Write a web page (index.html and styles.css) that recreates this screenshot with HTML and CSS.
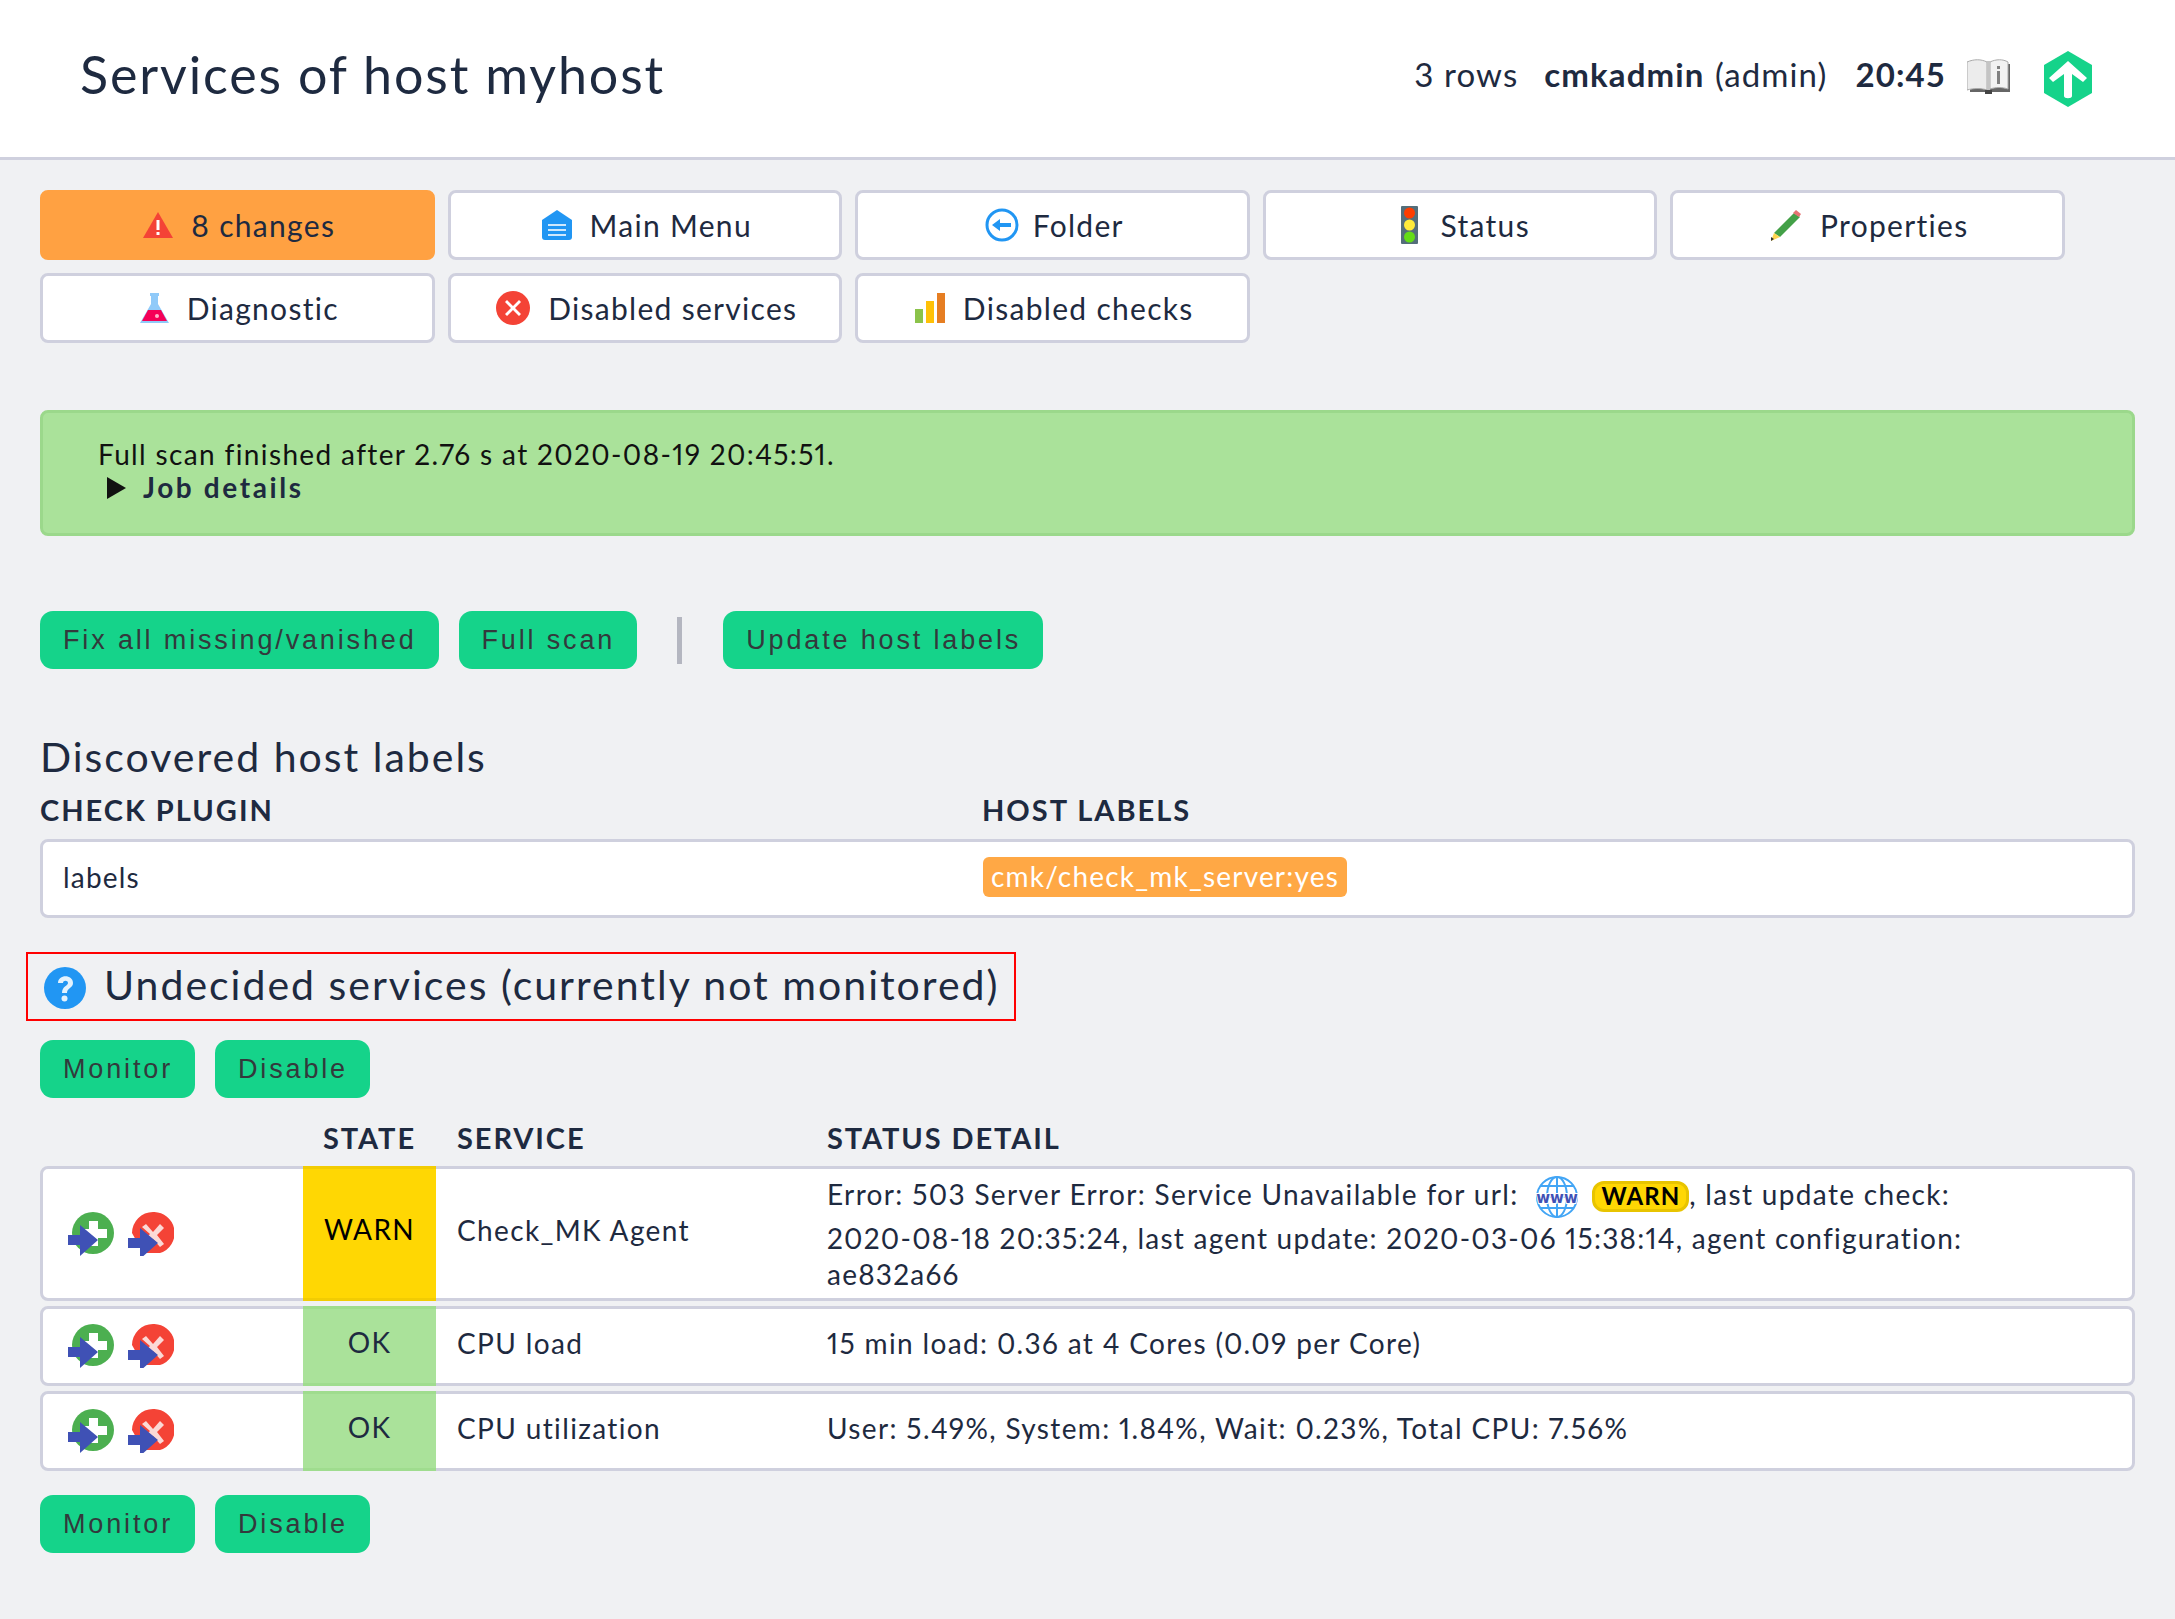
FILE: index.html
```html
<!DOCTYPE html>
<html lang="en">
<head>
    <meta charset="UTF-8">
    <title>Services of host myhost</title>
    <link rel="stylesheet" href="styles.css">
</head>
<body>
    <svg class="sprites" width="0" height="0">
        <symbol id="act-add" viewBox="0 0 46 44">
            <circle cx="25" cy="21" r="21" fill="#4caf50"/>
            <path d="M21 9h9v8h9v9h-9v8h-9v-8h-8v-9h8z" fill="#fff"/>
            <path d="M0 23h12v-10l18 15-18 16v-11h-12z" fill="#3f51b5"/>
        </symbol>
        <symbol id="act-del" viewBox="0 0 46 44">
            <path d="M25 0a21 21 0 0 1 7 41h-18v-2l-10-18a21 21 0 0 1 21-21z" fill="#f44336"/>
            <path d="M18 12l7 8 7-8 4 4-7 7 7 9-4 3-7-8-7 7-4-4 8-8-8-7z" fill="#fbd9d6"/>
            <path d="M0 26h12v-10l18 15-18 16v-11h-12z" fill="#3f51b5"/>
        </symbol>
    </svg>

    <header class="page-head">
        <h1>Services of host myhost</h1>
        <div class="head-info">
            <span class="rows">3 rows</span>
            <span class="user"><b>cmkadmin</b> <span class="role">(admin)</span></span>
            <b class="clock">20:45</b>
            <svg class="book" viewBox="0 0 43 35">
                <rect x="3" y="5" width="40" height="28" fill="#666"/>
                <path d="M0 3c7-3 14-3 20 0v28c-6-2-13-2-20 0z" fill="#ececec" stroke="#aaa"/>
                <path d="M23 3c6-3 13-3 18 0v27c-6-2-12-2-18 0z" fill="#f2f2f2" stroke="#aaa"/>
                <rect x="20" y="2" width="3" height="29" fill="#c4c4c4"/>
                <rect x="18" y="31" width="7" height="4" fill="#444"/>
                <rect x="30" y="12" width="3" height="13" fill="#808080"/>
                <rect x="30" y="7" width="3" height="3" fill="#808080"/>
            </svg>
            <svg class="logo" viewBox="0 0 48 56">
                <path d="M24 0l24 14v28l-24 14-24-14v-28z" fill="#15d38a"/>
                <path d="M24 11l19 17-4 4-11-8v22c0 3-8 3-8 0v-22l-11 8-4-4z" fill="#fff" transform="translate(0 -1)"/>
            </svg>
        </div>
    </header>

    <main class="content">
        <nav class="toolbar">
            <a class="tool-btn changes">
                <svg class="ico" width="30" height="26" viewBox="0 0 30 26"><path d="M15 0l15 26h-30z" fill="#f44336"/><rect x="13.500" y="8" width="3" height="10" fill="#fff"/><rect x="13.500" y="20" width="3" height="3" fill="#fff"/></svg>
                8 changes
            </a>
            <a class="tool-btn">
                <svg class="ico" width="30" height="30" viewBox="0 0 30 30"><path d="M15 0l15 10v17a3 3 0 0 1-3 3h-24a3 3 0 0 1-3-3v-17z" fill="#2196f3"/><path d="M6 14h18v2h-18zM6 19h18v2h-18zM6 24h18v2h-18z" fill="#cfe8fc"/></svg>
                Main Menu
            </a>
            <a class="tool-btn folder-btn">
                <svg class="ico" width="34" height="34" viewBox="0 0 34 34"><circle cx="17" cy="17" r="15" fill="#fff" stroke="#2196f3" stroke-width="3"/><path d="M7 17l8-6v4h11v4h-11v4z" fill="#2196f3"/></svg>
                Folder
            </a>
            <a class="tool-btn status-btn">
                <svg class="ico" width="17" height="38" viewBox="0 0 17 38"><rect width="17" height="38" rx="1" fill="#546e7a"/><ellipse cx="8.500" cy="7" rx="5.500" ry="5.500" fill="#ff3d00"/><ellipse cx="8.500" cy="19" rx="5.500" ry="5.500" fill="#ffeb3b"/><ellipse cx="8.500" cy="31" rx="5.500" ry="5.500" fill="#64dd17"/></svg>
                Status
            </a>
            <a class="tool-btn">
                <svg class="ico" width="32" height="32" viewBox="0 0 32 32"><path d="M24 4l6 4-20 20-6-4z" fill="#43a047"/><path d="M26 1l5 4-2 3-6-4z" fill="#e57373"/><path d="M4 24l6 4-9 4z" fill="#ffd54f"/><path d="M1 28l3 2-3 2z" fill="#333"/></svg>
                Properties
            </a>
            <a class="tool-btn">
                <svg class="ico" width="29" height="30" viewBox="0 0 29 30"><path d="M10 0h9v3h-1v8l11 19h-29l11-19v-8h-1z" fill="#90caf9"/><path d="M8 17h13l6 11h-25z" fill="#f50057"/><circle cx="17" cy="23" r="2" fill="#ffb3c9"/></svg>
                Diagnostic
            </a>
            <a class="tool-btn">
                <svg class="ico" width="34" height="34" viewBox="0 0 34 34"><circle cx="17" cy="17" r="17" fill="#f44336"/><path d="M11 9l6 6 6-6 2 2-6 6 6 6-2 2-6-6-6 6-2-2 6-6-6-6z" fill="#fff"/></svg>
                Disabled services
            </a>
            <a class="tool-btn">
                <svg class="ico" width="30" height="30" viewBox="0 0 30 30"><rect y="16" width="8" height="14" fill="#8bc34a"/><rect x="11" y="8" width="8" height="22" fill="#ffc107"/><rect x="22" width="8" height="30" fill="#e67e22"/></svg>
                Disabled checks
            </a>
        </nav>

        <section class="message">
            <div>Full scan finished after 2.76 s at 2020-08-19 20:45:51.</div>
            <div class="job"><span class="tri"></span><b>Job details</b></div>
        </section>

        <div class="actions first-actions">
            <a class="btn">Fix all missing/vanished</a>
            <a class="btn">Full scan</a>
            <span class="sep"></span>
            <a class="btn">Update host labels</a>
        </div>

        <h2 class="labels-title">Discovered host labels</h2>
        <div class="labels-head">
            <span>CHECK PLUGIN</span>
            <span>HOST LABELS</span>
        </div>
        <div class="labels-row">
            <span>labels</span>
            <span><span class="tag">cmk/check_mk_server:yes</span></span>
        </div>

        <h2 class="undecided">
            <svg width="42" height="42" viewBox="0 0 42 42"><circle cx="21" cy="21" r="21" fill="#2196f3"/><path d="M14 16c0-9 15-9 15 0 0 5-6 5-6 10h-5c0-7 6-7 6-10 0-3-5-3-5 0z" fill="#e3f2fd"/><circle cx="20.500" cy="31.500" r="3" fill="#e3f2fd"/></svg>
            <span>Undecided services (currently not monitored)</span>
        </h2>

        <div class="actions">
            <a class="btn">Monitor</a>
            <a class="btn">Disable</a>
        </div>

        <div class="svc-head">
            <span></span>
            <span class="c">STATE</span>
            <span>SERVICE</span>
            <span>STATUS DETAIL</span>
        </div>

        <div class="svc tall">
            <div class="svc-icons"><svg width="46" height="44"><use href="#act-add"/></svg><svg width="46" height="44"><use href="#act-del"/></svg></div>
            <div class="state warn">WARN</div>
            <div class="svc-name">Check_MK Agent</div>
            <div class="detail">
                <div class="detail-first">Error: 503 Server Error: Service Unavailable for url:<svg class="www" width="42" height="42" viewBox="0 0 42 42">
                        <g fill="none" stroke="#42a5f5" stroke-width="2"><circle cx="21" cy="21" r="20"/><ellipse cx="21" cy="21" rx="10" ry="20"/><path d="M21 1v40M4 10h34M4 32h34M1 21h40"/></g>
                        <text x="21" y="27" class="www-text">www</text>
                    </svg><span class="pill">WARN</span>, last update check:</div>
                <div class="detail-rest">2020-08-18 20:35:24, last agent update: 2020-03-06 15:38:14, agent configuration:<br>ae832a66</div>
            </div>
        </div>
        <div class="svc">
            <div class="svc-icons"><svg width="46" height="44"><use href="#act-add"/></svg><svg width="46" height="44"><use href="#act-del"/></svg></div>
            <div class="state ok">OK</div>
            <div class="svc-name">CPU load</div>
            <div class="svc-text">15 min load: 0.36 at 4 Cores (0.09 per Core)</div>
        </div>
        <div class="svc">
            <div class="svc-icons"><svg width="46" height="44"><use href="#act-add"/></svg><svg width="46" height="44"><use href="#act-del"/></svg></div>
            <div class="state ok">OK</div>
            <div class="svc-name">CPU utilization</div>
            <div class="svc-text">User: 5.49%, System: 1.84%, Wait: 0.23%, Total CPU: 7.56%</div>
        </div>

        <div class="actions last-actions">
            <a class="btn">Monitor</a>
            <a class="btn">Disable</a>
        </div>
    </main>
</body>
</html>
```

FILE: styles.css
```css
* {
    box-sizing: border-box;
}

html, body {
    margin: 0;
    height: 100%;
}

body {
    background-color: #f0f1f3;
    color: #1e2a40;
    font-family: Lato, "Liberation Sans", sans-serif;
    font-size: 28px;
    letter-spacing: 1.36px;
    font-variant-numeric: proportional-nums;
}

.sprites {
    position: absolute;
}

.page-head {
    height: 160px;
    background-color: #fff;
    border-bottom: 3px solid #cfd0de;
    display: flex;
    align-items: center;
    justify-content: space-between;
    padding: 0 83px 10px 80px;
}

.page-head h1 {
    margin: 0;
    font-size: 52px;
    font-weight: 400;
    letter-spacing: 1.85px;
}

.head-info {
    display: flex;
    align-items: center;
    font-size: 33px;
    letter-spacing: 1.1px;
    font-variant-numeric: normal;
}

.user {
    margin-left: 26px;
}

.role {
    margin-left: 1px;
}

.clock {
    margin-left: 28px;
}

.book {
    width: 43px;
    height: 35px;
    margin: 6px 34px 0 21px;
}

.logo {
    width: 48px;
    height: 56px;
    margin-top: 10px;
}

.content {
    padding: 30px 40px 0;
}

.toolbar {
    display: grid;
    grid-template-columns: repeat(5, 394.500px);
    column-gap: 13px;
    row-gap: 13px;
}

.tool-btn {
    height: 70px;
    padding-left: 4px;
    background-color: #fff;
    border: 3px solid #cfd0de;
    border-radius: 8px;
    display: flex;
    align-items: center;
    justify-content: center;
    font-size: 30px;
    letter-spacing: 1.3px;
}

.tool-btn .ico {
    margin-right: 18px;
}

.folder-btn .ico {
    margin-right: 14px;
}

.status-btn {
    padding-left: 11px;
}

.status-btn .ico {
    margin-right: 23px;
}

.tool-btn.changes {
    background-color: #ffa142;
    border-color: #ffa142;
}

.message {
    height: 126px;
    margin-top: 67px;
    padding: 25px 55px 0;
    background-color: #aae29a;
    border: 3px solid #9bd88b;
    border-radius: 8px;
    line-height: 33px;
    color: #111;
}

.job {
    display: flex;
    align-items: center;
    padding-left: 9px;
}

.job b {
    color: #1e2a40;
    letter-spacing: 2.6px;
}

.tri {
    width: 0;
    height: 0;
    border-left: 19px solid #111;
    border-top: 11px solid transparent;
    border-bottom: 11px solid transparent;
    margin-right: 17px;
}

.actions {
    display: flex;
    align-items: center;
    gap: 20px;
}

.first-actions {
    margin-top: 75px;
}

.btn {
    height: 58px;
    padding: 0 22px 0 23px;
    display: flex;
    align-items: center;
    background-color: #15d38a;
    border-radius: 13px;
    color: #33393c;
    font-family: "Liberation Sans", Arial, sans-serif;
    font-size: 27px;
    letter-spacing: 2.85px;
}

.sep {
    width: 5px;
    height: 47px;
    background-color: #b4b6c0;
    margin: 0 21px 0 20px;
}

h2 {
    font-weight: 400;
    margin: 0;
    letter-spacing: 2px;
}

.labels-title {
    margin-top: 64px;
    font-size: 41px;
    line-height: 48px;
}

.labels-head {
    display: grid;
    grid-template-columns: 942px 1fr;
    margin-top: 11px;
    line-height: 36px;
    font-weight: 700;
    letter-spacing: 2px;
    font-size: 29px;
}

.labels-row {
    display: grid;
    grid-template-columns: 920px 1fr;
    align-items: center;
    height: 79px;
    margin-top: 11px;
    padding-left: 20px;
    padding-bottom: 4px;
    background-color: #fff;
    border: 3px solid #cfd0de;
    border-radius: 8px;
    letter-spacing: 1.2px;
}

.tag {
    display: inline-block;
    height: 40px;
    line-height: 38px;
    padding: 0 8px;
    background-color: #ffa845;
    border-radius: 6px;
    color: #fff;
}

.undecided {
    display: flex;
    align-items: center;
    gap: 18px;
    width: 990px;
    height: 69px;
    margin: 34px 0 0 -14px;
    padding-left: 16px;
    border: 2px solid #f00;
    font-size: 41px;
    white-space: nowrap;
}

.undecided svg {
    flex: none;
    margin-top: 2px;
}

.undecided span {
    margin-bottom: 5px;
}

.undecided + .actions {
    margin-top: 19px;
}

.svc-head, .svc {
    display: grid;
    grid-template-columns: 260px 133px 370px 1fr;
}

.svc-head {
    margin-top: 11px;
    height: 57px;
    padding: 0 3px;
    align-items: center;
    font-weight: 700;
    font-size: 29px;
    letter-spacing: 1.9px;
}

.svc-head span {
    padding-left: 21px;
}

.svc-head .c {
    padding-left: 0;
    text-align: center;
}

.svc {
    height: 80px;
    margin-bottom: 5px;
    align-items: center;
    background-color: #fff;
    border: 3px solid #cfd0de;
    border-radius: 8px;
}

.svc.tall {
    height: 135px;
}

.svc-name, .svc-text, .detail {
    padding-left: 21px;
}

.svc-name, .svc-text {
    margin-bottom: 6px;
}

.tall .svc-name {
    margin-bottom: 8px;
}

.svc-icons {
    display: flex;
    gap: 14px;
    padding-left: 25px;
}

.state {
    align-self: stretch;
    display: flex;
    align-items: center;
    justify-content: center;
    margin: -3px 0;
}

.state.warn {
    background-color: #ffd703;
    border-top: 3px solid #f2cc03;
    border-bottom: 3px solid #f2cc03;
    color: #000;
    padding-bottom: 9px;
}

.state.ok {
    background-color: #aae29a;
    border-top: 3px solid #9fdc8e;
    border-bottom: 3px solid #9fdc8e;
    padding-bottom: 8px;
}

.detail {
    line-height: 36px;
}

.detail-first {
    height: 44px;
    line-height: 36px;
    letter-spacing: 1.33px;
}

.detail-rest {
    letter-spacing: 1.24px;
}

.www {
    margin: 0 14px 0 18px;
    vertical-align: middle;
}

.www-text {
    fill: #3f51b5;
    font-family: "DejaVu Sans", sans-serif;
    font-size: 15px;
    font-weight: 700;
    text-anchor: middle;
    letter-spacing: 0;
    stroke: #fff;
    stroke-width: 2px;
    paint-order: stroke;
}

.pill {
    display: inline-block;
    height: 31px;
    background-color: #ffd703;
    border: 3px solid #e8c400;
    border-radius: 12px;
    color: #000;
    font-weight: 700;
    font-size: 24px;
    line-height: 24px;
    padding: 0 6px;
    letter-spacing: 1px;
}

.last-actions {
    margin-top: 24px;
}
```
